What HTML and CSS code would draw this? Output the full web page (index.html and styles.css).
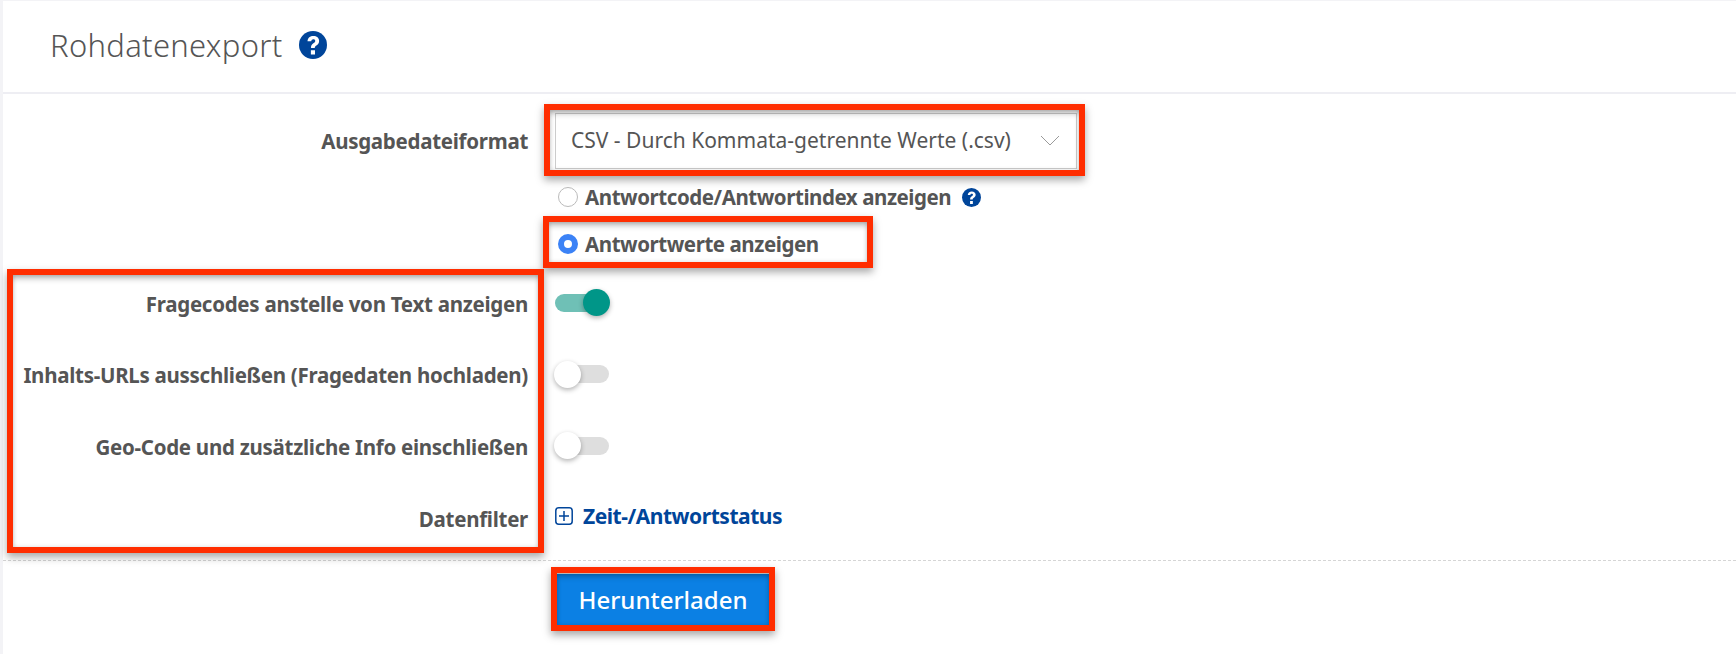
FILE: index.html
```html
<!DOCTYPE html>
<html lang="de">
<head>
<meta charset="utf-8">
<title>Rohdatenexport</title>
<link rel="stylesheet" href="styles.css">
</head>
<body>
<main class="page">
  <header class="head">
    <h1 class="title">Rohdatenexport</h1>
    <svg class="help help-lg" viewBox="0 0 28 28"><circle cx="14" cy="14" r="14" fill="#00459a"/><path transform="translate(-3.500 -3.200) scale(1.250)" d="M9.6 10.800c.2-2.700 2.100-4.200 4.700-4.200 2.700 0 4.600 1.600 4.600 3.900 0 1.800-1 2.800-2.200 3.600-1 .7-1.300 1.100-1.300 2.100h-3c-.1-1.900.5-2.900 1.900-3.900 1-.7 1.500-1.100 1.500-1.800 0-.8-.6-1.300-1.500-1.300-1 0-1.600.6-1.700 1.600z M12.300 18h3.300v3.300h-3.300z" fill="#fff"/></svg>
  </header>
  <section class="form">
    <div class="row row-select">
      <div class="label">Ausgabedateiformat</div>
      <div class="select"><span>CSV - Durch Kommata-getrennte Werte (.csv)</span>
        <svg class="chev" viewBox="0 0 20 11"><path d="M1 1l9 9 9-9" fill="none" stroke="#9a9a9a" stroke-width="1"/></svg>
      </div>
    </div>
    <div class="row row-radio">
      <div class="label"></div>
      <div class="radio-line"><span class="radio"></span><b>Antwortcode/Antwortindex anzeigen</b>
        <svg class="help help-sm" viewBox="0 0 28 28"><circle cx="14" cy="14" r="14" fill="#00459a"/><path transform="translate(-3.500 -3.200) scale(1.250)" d="M9.6 10.800c.2-2.700 2.100-4.200 4.700-4.200 2.700 0 4.600 1.600 4.600 3.900 0 1.800-1 2.800-2.200 3.600-1 .7-1.300 1.100-1.300 2.100h-3c-.1-1.900.5-2.900 1.900-3.900 1-.7 1.500-1.100 1.500-1.800 0-.8-.6-1.300-1.500-1.300-1 0-1.600.6-1.700 1.600z M12.300 18h3.300v3.300h-3.300z" fill="#fff"/></svg>
      </div>
    </div>
    <div class="row row-radio2">
      <div class="label"></div>
      <div class="radio-line"><span class="radio radio-on"></span><b>Antwortwerte anzeigen</b></div>
    </div>
    <div class="row row-toggle">
      <div class="label">Fragecodes anstelle von Text anzeigen</div>
      <div class="toggle toggle-on"><span class="knob"></span></div>
    </div>
    <div class="row row-toggle">
      <div class="label">Inhalts-URLs ausschließen (Fragedaten hochladen)</div>
      <div class="toggle"><span class="knob"></span></div>
    </div>
    <div class="row row-toggle">
      <div class="label">Geo-Code und zusätzliche Info einschließen</div>
      <div class="toggle"><span class="knob"></span></div>
    </div>
    <div class="row row-filter">
      <div class="label">Datenfilter</div>
      <a class="link"><svg class="plus" viewBox="0 0 18 18"><rect x=".8" y=".8" width="16.400" height="16.400" rx="3" fill="none" stroke="#00459a" stroke-width="1.500"/><path d="M9 4v10M4 9h10" stroke="#00459a" stroke-width="1.500"/></svg>Zeit-/Antwortstatus</a>
    </div>
  </section>
  <footer class="foot">
    <button class="btn">Herunterladen</button>
  </footer>
  <div class="mark mark-select"></div>
  <div class="mark mark-radio"></div>
  <div class="mark mark-rows"></div>
  <div class="mark mark-btn"></div>
</main>
</body>
</html>
```
FILE: styles.css
```css
* { box-sizing: border-box; }
html, body { margin: 0; height: 100%; background: #fff; }
body { font-family: "Noto Sans", "Open Sans", sans-serif; color: #555; overflow: hidden; }
.page { position: relative; height: 654px; border-left: 3px solid #f3f3f6; border-top: 1px solid #f3f3f6; }
.head { height: 93px; border-bottom: 2px solid #eeeef3; padding: 0 0 4px 47px; display: flex; align-items: center; gap: 16px; }
.title { margin: 0; font-size: 31px; font-weight: 300; color: #555; letter-spacing: .3px; }
.help { display: block; flex: none; }
.help-lg { width: 28px; height: 28px; }
.help-sm { width: 19px; height: 19px; margin-left: 11px; }
.form { display: flex; flex-direction: column; }
.row { display: grid; grid-template-columns: 525px auto; column-gap: 27px; align-items: center; justify-content: start; }
.label { font-size: 20.500px; font-weight: 700; text-align: right; letter-spacing: -.28px; color: #555; white-space: nowrap; }
.row-select { height: 94px; }
.select { width: 522px; height: 56px; border: 1px solid #ccc; display: flex; align-items: center; justify-content: space-between; padding: 0 16px 2px 15px; font-size: 21px; color: #555; }
.chev { width: 20px; height: 11px; }
.row-radio { height: 46px; margin-top: -14px; }
.row-radio2 { height: 47px; }
.radio-line { display: flex; align-items: center; font-size: 20.500px; letter-spacing: -.44px; margin-left: 3px; }
.radio-line b { font-weight: 700; }
.radio { width: 20px; height: 20px; border-radius: 50%; border: 1px solid #bbb; background: #fff; margin-right: 7px; flex: none; }
.radio-on { border: 6px solid #3b82f6; }
.row-toggle { height: 71.500px; }
.row-toggle .label { padding-top: 2px; }
.toggle { position: relative; width: 54px; height: 18px; border-radius: 9px; background: #dedede; }
.knob { position: absolute; left: -1px; top: -4.500px; width: 27px; height: 27px; border-radius: 50%; background: #fff; box-shadow: 0 2px 5px rgba(0,0,0,.3); }
.toggle-on { background: #6fc0b6; }
.toggle-on .knob { left: 28px; background: #009688; }
.row-filter { height: 78px; }
.row-filter .label { margin-top: -4px; }
.link { display: flex; align-items: center; gap: 10px; color: #00459a; font-size: 21px; font-weight: 700; letter-spacing: -.47px; margin-top: -10px; }
.plus { width: 18px; height: 18px; flex: none; }
.foot { border-top: 1px dashed #d5d5d5; padding: 13px 0 0 554px; }
.btn { display: block; width: 212px; height: 52px; border: 0; background: #0b80e4; color: #fff; font: 500 24px "Noto Sans", sans-serif; padding: 0; }
.mark { position: absolute; border: 6px solid #ff2d00; box-shadow: 0 4px 8px rgba(0,0,0,.35), inset 0 5px 6px -2px rgba(0,0,0,.3), inset 0 0 4px rgba(0,0,0,.15); pointer-events: none; }
.mark-select { left: 541px; top: 103px; width: 541px; height: 72px; }
.mark-radio { left: 540px; top: 215px; width: 330px; height: 52px; }
.mark-rows { left: 4px; top: 268px; width: 537px; height: 284px; }
.mark-btn { left: 548px; top: 566px; width: 224px; height: 64px; }
```
